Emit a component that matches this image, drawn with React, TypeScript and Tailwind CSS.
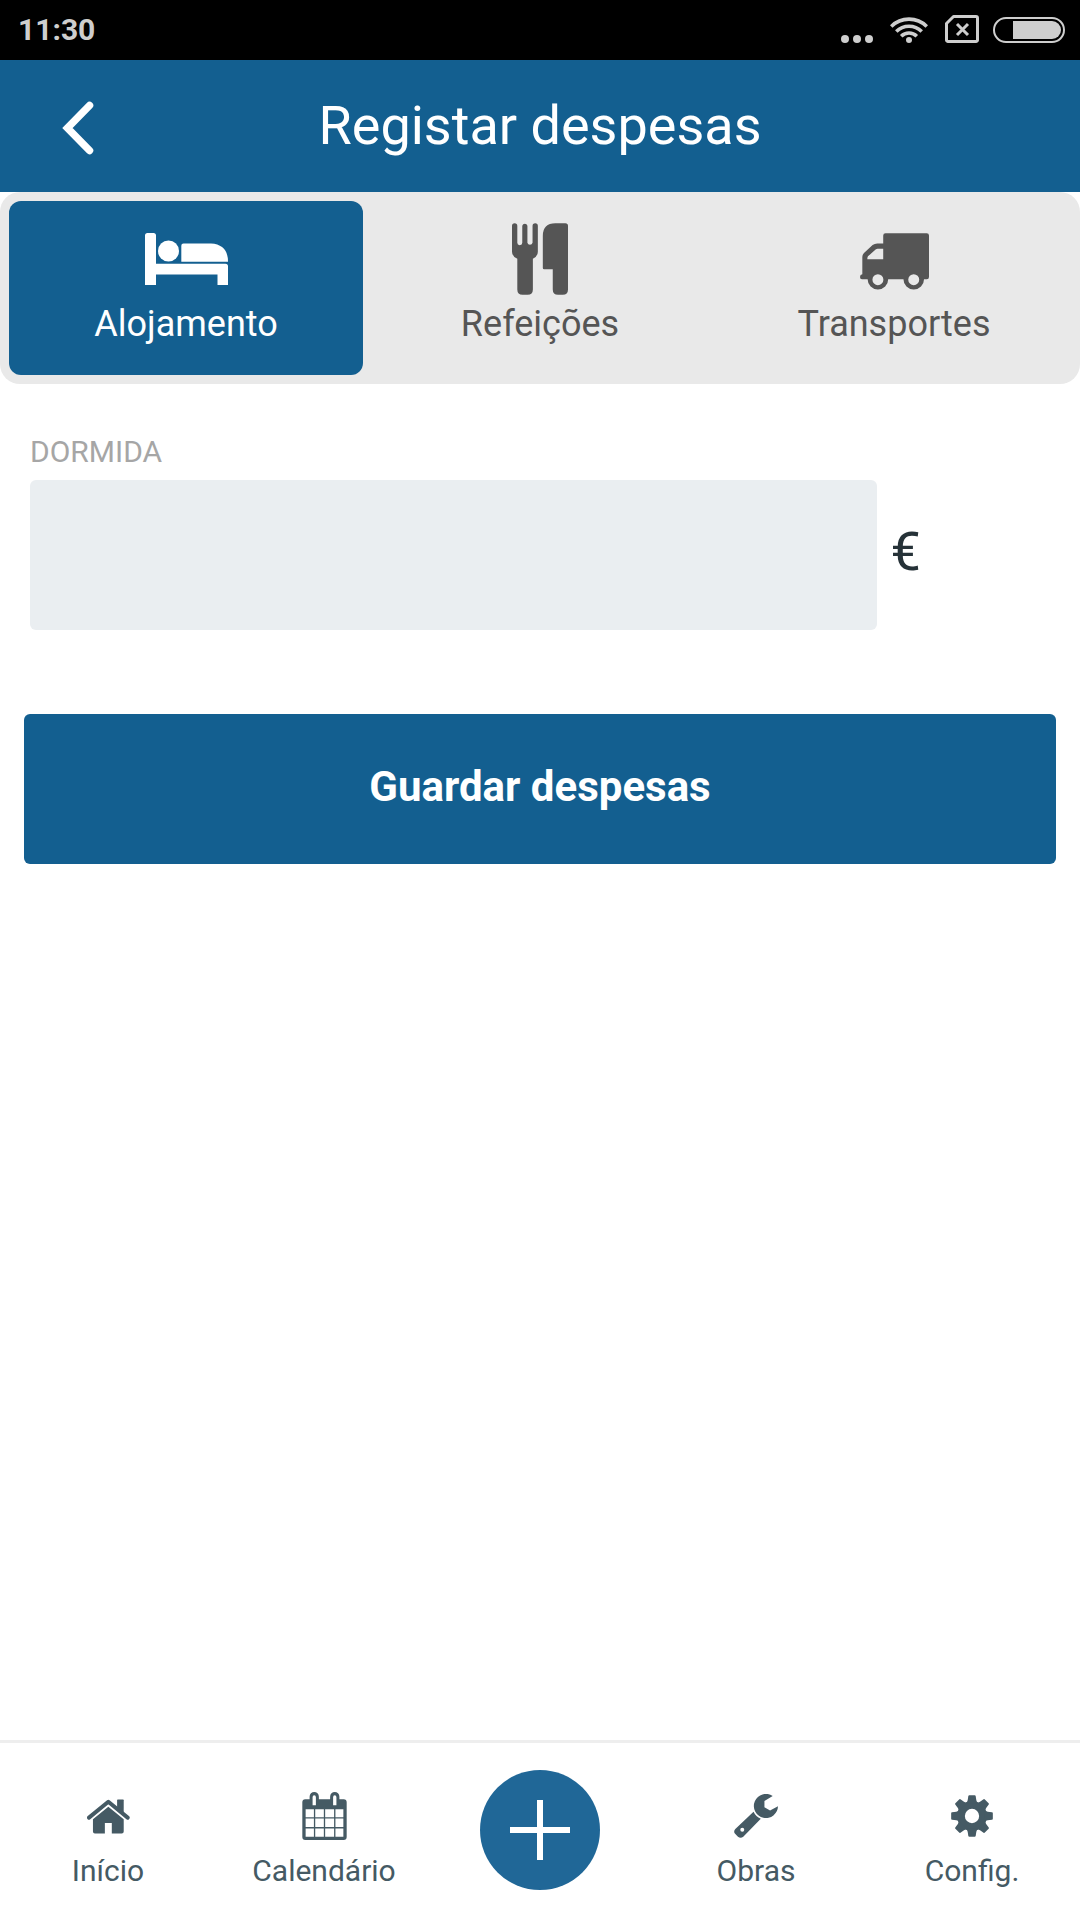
import { useState } from "react";
import type { ReactNode } from "react";

function DotsIcon() {
  return (
    <svg viewBox="0 0 32 28" className="h-7 w-8" fill="currentColor" aria-hidden="true">
      <circle cx="4" cy="23" r="4" />
      <circle cx="16" cy="23" r="4" />
      <circle cx="28" cy="23" r="4" />
    </svg>
  );
}

function WifiIcon() {
  return (
    <svg viewBox="0 0 38 28" className="h-7 w-[38px]" fill="none" stroke="currentColor" strokeWidth="3.6" aria-hidden="true">
      <path d="M1.2 10.500a25.2 25.2 0 0 1 35.6 0" />
      <path d="M6.3 15.500a18 18 0 0 1 25.4 0" />
      <path d="M11.2 20.300a11 11 0 0 1 15.6 0" />
      <circle cx="19" cy="24" r="3" fill="currentColor" stroke="none" />
    </svg>
  );
}

function SimIcon() {
  return (
    <svg viewBox="0 0 34 30" className="h-[30px] w-[34px]" fill="none" stroke="currentColor" strokeWidth="3" aria-hidden="true">
      <path d="M1.5 8.500L8.500 1.500H31a1.500 1.500 0 0 1 1.500 1.500V25a1.500 1.500 0 0 1-1.500 1.500H3A1.500 1.500 0 0 1 1.500 25z" strokeLinejoin="round" />
      <path d="M12 9l11 11M23 9L12 20" />
    </svg>
  );
}

function BatteryIcon() {
  return (
    <svg viewBox="0 0 72 28" className="h-7 w-[72px]" aria-hidden="true">
      <rect x="1" y="2" width="70" height="24" rx="12" fill="none" stroke="currentColor" strokeWidth="2" />
      <path d="M20 5H59a9 9 0 0 1 0 18H20z" fill="currentColor" />
    </svg>
  );
}

function BackIcon() {
  return (
    <svg viewBox="0 0 32 54" className="h-[54px] w-8" fill="none" stroke="currentColor" strokeWidth="7.5" strokeLinecap="round" aria-hidden="true">
      <path d="M27.500 4.500L5.500 27l22 22.500" />
    </svg>
  );
}

function BedIcon() {
  return (
    <svg viewBox="0 0 83 52" className="h-[52px] w-[83px]" fill="currentColor" aria-hidden="true">
      <path d="M2.500 0H8.500Q11 0 11 2.500V30.700H80.500Q83 30.700 83 33.200V52H72.500V41.500H11V52H0V2.500Q0 0 2.500 0z" />
      <circle cx="23.500" cy="18" r="10.500" />
      <path d="M38.500 10.500H66Q83 11.500 83 28.700H36.300V12.700Q36.300 10.500 38.500 10.500z" />
    </svg>
  );
}

function CutleryIcon() {
  return (
    <svg viewBox="0 0 169 216" className="h-[72px] w-14" fill="currentColor" aria-hidden="true">
      <path d="M0 8a8 8 0 0 1 16 0V59a7.500 7.500 0 0 0 15 0V8a8 8 0 0 1 15.500 0V59a8 8 0 0 0 15.500 0V8a8 8 0 0 1 16 0V86q0 14-15 21V200q0 16-16 16H32q-16 0-16-16V107q-16-7-16-21z" />
      <path d="M169 8V200q0 16-16 16h-14q-16 0-16-16V139H97q-4 0-4-4V38Q93 0 131 0H161q8 0 8 8z" />
    </svg>
  );
}

function TruckIcon() {
  return (
    <svg viewBox="0 0 208 171" className="mt-1 h-[57px] w-[69px]" fill="currentColor" aria-hidden="true">
      <path
        fillRule="evenodd"
        d="M77 0H201Q208 0 208 7V132Q208 139 201 139H193A31 31 0 0 1 131 139H85A31 31 0 0 1 23 139H6Q0 139 0 132T7 124V72Q7 65 12 60L38 36Q44 31 52 31H70V7Q70 0 77 0zM70 47H53Q50 47 47 49L24 70Q22 73 22 79H70zM54 124a16.500 16.500 0 1 0 0 33a16.500 16.500 0 1 0 0-33zM162 124a16.500 16.500 0 1 0 0 33a16.500 16.500 0 1 0 0-33z"
      />
    </svg>
  );
}

function HomeIcon() {
  return (
    <svg viewBox="0 0 130 105" className="h-[35px] w-[43px]" fill="currentColor" aria-hidden="true">
      <path d="M6 56L64.500 8L123 56" fill="none" stroke="currentColor" strokeWidth="12" strokeLinecap="round" strokeLinejoin="round" />
      <path d="M91 3Q91 1 93 1H109Q111 1 111 3V43L91 28z" />
      <path d="M64.500 23L111 61V98Q111 104 105 104H75V72H54V104H24Q18 104 18 98V61z" />
    </svg>
  );
}

function CalendarIcon() {
  return (
    <svg viewBox="0 0 134 145" className="h-12 w-[45px]" fill="currentColor" aria-hidden="true">
      <path
        fillRule="evenodd"
        d="M9 22H22V14a14 14 0 0 1 28 0V22H84V14a14 14 0 0 1 28 0V22H125Q134 22 134 31V136Q134 145 125 145H9Q0 145 0 136V31Q0 22 9 22zM36 10Q31 10 31 16V40H41V16Q41 10 36 10zM98 10Q93 10 93 16V40H103V16Q103 10 98 10zM10 52V76H35V52zM39 52V76H65V52zM69 52V76H96V52zM100 52V76H124V52zM10 80V106H35V80zM39 80V106H65V80zM69 80V106H96V80zM100 80V106H124V80zM10 110V135H35V110zM39 110V135H65V110zM69 110V135H96V110zM100 110V135H124V110z"
      />
    </svg>
  );
}

function WrenchIcon() {
  return (
    <svg viewBox="0 0 133 133" className="size-11" fill="currentColor" aria-hidden="true">
      <path d="M117 6A36.500 36.500 0 1 0 133 37L109 50L92 40V21z" />
      <path fillRule="evenodd" d="M59 54L4 106Q-3 114 4 121L12 129Q20 136 28 129L81 75Q66 69 59 54zM25 102a6 6 0 1 0 0 12a6 6 0 1 0 0-12z" />
    </svg>
  );
}

function GearIcon() {
  const angles = [0, 45, 90, 135, 180, 225, 270, 315];
  return (
    <svg viewBox="-63 -63 126 126" className="size-[42px]" fill="currentColor" aria-hidden="true">
      <circle r="33" fill="none" stroke="currentColor" strokeWidth="23" />
      {angles.map((angle) => (
        <path key={angle} d="M-18 -38Q-14 -42 -13 -47L-11 -60Q-10.500 -62.500 -8 -62.500H8Q10.500 -62.500 11 -60L13 -47Q14 -42 18 -38z" transform={`rotate(${angle})`} />
      ))}
    </svg>
  );
}

function PlusIcon() {
  return (
    <svg viewBox="0 0 60 60" className="size-15" fill="none" stroke="currentColor" strokeWidth="6" aria-hidden="true">
      <path d="M30 0V60M0 30H60" />
    </svg>
  );
}

const tabs: { label: string; icon: ReactNode }[] = [
  { label: "Alojamento", icon: <BedIcon /> },
  { label: "Refeições", icon: <CutleryIcon /> },
  { label: "Transportes", icon: <TruckIcon /> },
];

function NavItem({ label, children }: { label: string; children: ReactNode }) {
  return (
    <a href="#" className="flex flex-col items-center gap-[13px] pt-[21px] text-[30px] leading-9 text-[#455a64]">
      <span className="flex h-12 items-center justify-center">{children}</span>
      {label}
    </a>
  );
}

export default function App() {
  const [active, setActive] = useState("Alojamento");
  const [amount, setAmount] = useState("");

  return (
    <div className="flex min-h-screen flex-col bg-white font-['Roboto',sans-serif]">
      <div className="flex h-15 items-center justify-between bg-black pr-[15px] pl-[18px] text-[#cecece]">
        <span className="text-[30px] leading-9 font-bold">11:30</span>
        <div className="flex items-center">
          <div className="mr-3.5 flex items-center gap-[17px]">
            <DotsIcon />
            <WifiIcon />
            <SimIcon />
          </div>
          <BatteryIcon />
        </div>
      </div>

      <header className="grid h-33 grid-cols-[1fr_auto_1fr] items-center bg-[#135f90] text-white">
        <button type="button" aria-label="Voltar" className="ml-[62px] justify-self-start pt-1">
          <BackIcon />
        </button>
        <h1 className="text-[54px] leading-16">Registar despesas</h1>
      </header>

      <main className="flex-1">
        <div role="tablist" className="grid grid-cols-3 rounded-[20px] bg-[#e9e9e9] p-[9px]">
          {tabs.map((tab) => (
            <button
              key={tab.label}
              type="button"
              role="tab"
              aria-selected={active === tab.label}
              onClick={() => setActive(tab.label)}
              className="flex flex-col items-center gap-2 rounded-xl pt-[22px] pb-[30px] text-4xl leading-[42px] text-[#555555] aria-selected:bg-[#135f90] aria-selected:text-white"
            >
              <span className="flex h-[72px] items-center justify-center">{tab.icon}</span>
              {tab.label}
            </button>
          ))}
        </div>

        <form className="px-6 pt-[50px]" onSubmit={(event) => event.preventDefault()}>
          <div className="px-1.5">
            <label htmlFor="dormida" className="block text-[30px] leading-9 text-[#a6a6a6]">
              DORMIDA
            </label>
            <div className="mt-2.5 flex items-center gap-3.5">
              <input
                id="dormida"
                inputMode="decimal"
                value={amount}
                onChange={(event) => setAmount(event.target.value)}
                className="h-[150px] w-[83%] rounded-md bg-[#eaeef1] px-6 text-[54px] text-[#263238] outline-none"
              />
              <span className="pb-1.5 text-[54px] leading-16 text-[#263238]">€</span>
            </div>
          </div>
          <button type="submit" className="mt-21 flex h-[150px] w-full items-center justify-center rounded-md bg-[#135f90] pb-1 text-[42px] leading-12 font-bold text-white">
            Guardar despesas
          </button>
        </form>
      </main>

      <nav className="grid grid-cols-5 items-center border-t-[3px] border-[#eeeeee] pt-[27px] pb-[30px]">
        <NavItem label="Início">
          <HomeIcon />
        </NavItem>
        <NavItem label="Calendário">
          <CalendarIcon />
        </NavItem>
        <button type="button" aria-label="Adicionar" className="flex size-30 items-center justify-center justify-self-center rounded-full bg-[#206797] text-white">
          <PlusIcon />
        </button>
        <NavItem label="Obras">
          <WrenchIcon />
        </NavItem>
        <NavItem label="Config.">
          <GearIcon />
        </NavItem>
      </nav>
    </div>
  );
}
